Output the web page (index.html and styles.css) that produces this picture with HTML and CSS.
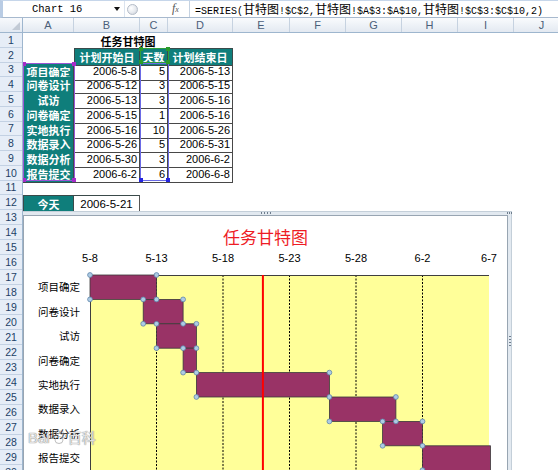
FILE: index.html
```html
<!DOCTYPE html>
<html lang="zh-CN">
<head>
<meta charset="utf-8">
<title>任务甘特图</title>
<link rel="stylesheet" href="styles.css">
</head>
<body>
<div class="app">
  <div class="fbar">
    <div class="namebox"><span class="name">Chart 16</span><span class="dd"></span></div>
    <div class="fxarea"><span class="knob"></span><span class="fx"><i>f</i><small>x</small></span></div>
    <div class="formula">=SERIES(<span class="cjk">甘特图</span>!$C$2,<span class="cjk">甘特图</span>!$A$3:$A$10,<span class="cjk">甘特图</span>!$C$3:$C$10,2)</div>
  </div>
  <div class="sheet">
    <div class="corner"><span class="tri"></span></div>
    <div class="colhdr">
      <span>A</span><span>B</span><span>C</span><span>D</span><span>E</span><span>F</span><span>G</span><span>H</span><span>I</span><span>J</span>
    </div>
    <div class="rowhdr">
      <span>1</span><span>2</span><span>3</span><span>4</span><span>5</span><span>6</span><span>7</span><span>8</span><span>9</span><span>10</span>
      <span>11</span><span>12</span><span>13</span><span>14</span><span>15</span><span>16</span><span>17</span><span>18</span><span>19</span><span>20</span>
      <span>21</span><span>22</span><span>23</span><span>24</span><span>25</span><span>26</span><span>27</span><span>28</span><span>29</span><span>30</span>
    </div>
    <div class="cells">
      <div class="row"><div class="ttl">任务甘特图</div></div>
      <div class="row"><div></div><div class="hd bt bl">计划开始日</div><div class="hd bt">天数</div><div class="hd bt">计划结束日</div></div>
      <div class="row"><div class="lab bl bt">项目确定</div><div class="num">2006-5-8</div><div class="num">5</div><div class="num">2006-5-13</div></div>
      <div class="row"><div class="lab bl">问卷设计</div><div class="num">2006-5-12</div><div class="num">3</div><div class="num">2006-5-15</div></div>
      <div class="row"><div class="lab bl">试访</div><div class="num">2006-5-13</div><div class="num">3</div><div class="num">2006-5-16</div></div>
      <div class="row"><div class="lab bl">问卷确定</div><div class="num">2006-5-15</div><div class="num">1</div><div class="num">2006-5-16</div></div>
      <div class="row"><div class="lab bl">实地执行</div><div class="num">2006-5-16</div><div class="num">10</div><div class="num">2006-5-26</div></div>
      <div class="row"><div class="lab bl">数据录入</div><div class="num">2006-5-26</div><div class="num">5</div><div class="num">2006-5-31</div></div>
      <div class="row"><div class="lab bl">数据分析</div><div class="num">2006-5-30</div><div class="num">3</div><div class="num">2006-6-2</div></div>
      <div class="row"><div class="lab bl">报告提交</div><div class="num">2006-6-2</div><div class="num">6</div><div class="num">2006-6-8</div></div>
      <div class="row"></div>
      <div class="row"><div class="lab bl bt">今天</div><div class="today bt">2006-5-21</div></div>

      <div class="sel sel-a"><i class="h tl"></i><i class="h tr"></i><i class="h bl2"></i><i class="h br"></i></div>
      <div class="sel sel-c"><i class="h bl2"></i><i class="h br"></i></div>
      <div class="sel sel-c2"><i class="h tl"></i><i class="h tr"></i><i class="h bl2"></i><i class="h br"></i></div>

      <div class="chart">
        <div class="chart-inner">
          <div class="ctitle">任务甘特图</div>
          <div class="axis"><span>5-8</span><span>5-13</span><span>5-18</span><span>5-23</span><span>5-28</span><span>6-2</span><span>6-7</span></div>
          <div class="cbody">
            <div class="cats"><span>项目确定</span><span>问卷设计</span><span>试访</span><span>问卷确定</span><span>实地执行</span><span>数据录入</span><span>数据分析</span><span>报告提交</span></div>
            <svg class="plot" width="399" height="200" viewBox="0 0 399 200">
              <rect x="0" y="0" width="399" height="200" fill="#ffff99"/>
              <g stroke="#000" stroke-width="1" stroke-dasharray="2 1.5">
                <line x1="66.5" y1="0" x2="66.5" y2="200"/>
                <line x1="133" y1="0" x2="133" y2="200"/>
                <line x1="199.5" y1="0" x2="199.5" y2="200"/>
                <line x1="266" y1="0" x2="266" y2="200"/>
                <line x1="332.5" y1="0" x2="332.5" y2="200"/>
              </g>
              <line x1="0.5" y1="0" x2="0.5" y2="200" stroke="#3f3f3f" stroke-width="1"/>
              <line x1="0" y1="0.5" x2="399" y2="0.5" stroke="#3f3f3f" stroke-width="1.2"/>
              <g fill="#993366" stroke="#3a3a3a" stroke-width="0.8">
                <rect x="0" y="0" width="66.5" height="24.4"/>
                <rect x="53.2" y="24.4" width="39.9" height="24.4"/>
                <rect x="66.5" y="48.8" width="39.9" height="24.4"/>
                <rect x="93.1" y="73.2" width="13.3" height="24.4"/>
                <rect x="106.4" y="97.6" width="133" height="24.4"/>
                <rect x="239.4" y="122" width="66.5" height="24.4"/>
                <rect x="292.6" y="146.4" width="39.9" height="24.4"/>
                <rect x="332.5" y="170.8" width="68" height="30"/>
              </g>
              <line x1="172.9" y1="0" x2="172.9" y2="200" stroke="#ff0000" stroke-width="2"/>
              <g fill="#aecbe4" stroke="#5f87ab" stroke-width="0.8">
                <circle cx="0" cy="0" r="2.4"/><circle cx="66.5" cy="0" r="2.4"/><circle cx="0" cy="24.4" r="2.4"/><circle cx="66.5" cy="24.4" r="2.4"/>
                <circle cx="53.2" cy="24.4" r="2.4"/><circle cx="93.1" cy="24.4" r="2.4"/><circle cx="53.2" cy="48.8" r="2.4"/><circle cx="93.1" cy="48.8" r="2.4"/>
                <circle cx="66.5" cy="48.8" r="2.4"/><circle cx="106.4" cy="48.8" r="2.4"/><circle cx="66.5" cy="73.2" r="2.4"/><circle cx="106.4" cy="73.2" r="2.4"/>
                <circle cx="93.1" cy="73.2" r="2.4"/><circle cx="93.1" cy="97.6" r="2.4"/><circle cx="106.4" cy="97.6" r="2.4"/>
                <circle cx="239.4" cy="97.6" r="2.4"/><circle cx="106.4" cy="122" r="2.4"/><circle cx="239.4" cy="122" r="2.4"/>
                <circle cx="305.9" cy="122" r="2.4"/><circle cx="239.4" cy="146.4" r="2.4"/><circle cx="305.9" cy="146.4" r="2.4"/>
                <circle cx="292.6" cy="146.4" r="2.4"/><circle cx="332.5" cy="146.4" r="2.4"/><circle cx="292.6" cy="170.8" r="2.4"/><circle cx="332.5" cy="170.8" r="2.4"/>
                <circle cx="332.5" cy="195.2" r="2.4"/>
              </g>
            </svg>
          </div>
          <div class="wm"><span class="wm-bai">Bai</span><svg class="paw" width="16" height="16" viewBox="0 0 16 16"><g fill="none" stroke="#9a9a9a" stroke-width="0.8"><ellipse cx="8" cy="11" rx="4" ry="3.5"/><ellipse cx="4" cy="5" rx="1.6" ry="2.2"/><ellipse cx="7" cy="3" rx="1.5" ry="2"/><ellipse cx="10.5" cy="3.5" rx="1.5" ry="2"/><ellipse cx="13" cy="7" rx="1.5" ry="2"/></g></svg><span class="wm-bk">百科</span></div>
        </div>
        <span class="grip-top"></span>
        <span class="grip-right"></span>
        <span class="grip-tr"></span>
      </div>
    </div>
  </div>
</div>
</body>
</html>
```

FILE: styles.css
```css
* { box-sizing: border-box; margin: 0; padding: 0; }
html, body { width: 558px; height: 470px; overflow: hidden; background: #fff; }
body { font-family: "Liberation Sans", "Noto Sans CJK SC", sans-serif; color: #000; }
.app { width: 558px; height: 470px; position: relative; overflow: hidden; }

/* formula bar */
.fbar { display: flex; height: 18px; border-top: 1px solid #c6d6ea; border-bottom: 1px solid #a7b9ce; border-left: 3px solid #b9cce4; background: #fff; }
.namebox { width: 121px; display: flex; align-items: center; padding-left: 29px; font-family: "Liberation Mono", monospace; font-size: 10.5px; }
.namebox .dd { margin-left: auto; margin-right: 4px; width: 0; height: 0; border-left: 3px solid transparent; border-right: 3px solid transparent; border-top: 4px solid #111; }
.fxarea { width: 66px; display: flex; align-items: center; border-left: 1px solid #dbe3ee; border-right: 1px solid #c5d2e1; }
.knob { margin-left: 2px; width: 11px; height: 11px; border-radius: 50%; border: 1px solid #b4bcc8; background: radial-gradient(circle at 35% 35%, #ffffff 0, #e6e9ee 55%, #c4cad3 100%); }
.fx { margin-left: 34px; font-family: "Liberation Serif", serif; font-size: 12px; color: #555; line-height: 14px; }
.fx i { font-style: italic; }
.fx small { font-size: 8px; font-style: italic; }
.formula { flex: 1; padding-left: 5px; font-family: "Liberation Mono", monospace; font-size: 10px; line-height: 16px; white-space: nowrap; overflow: hidden; color: #000; }
.formula .cjk { font-family: "Noto Sans CJK SC", sans-serif; font-size: 12px; }

/* sheet */
.sheet { display: grid; grid-template-columns: 23px 1fr; grid-template-rows: 15px 1fr; height: 452px; }
.corner { background: linear-gradient(#f7f9fc, #e2e9f2); border-right: 1px solid #9eb6ce; border-bottom: 1px solid #9eb6ce; position: relative; }
.corner .tri { position: absolute; right: 2px; bottom: 2px; width: 0; height: 0; border-left: 8px solid transparent; border-bottom: 8px solid #c2cad5; }
.colhdr { display: grid; grid-template-columns: 51px 66px 28px 65px 57px repeat(5, 56px); background: linear-gradient(#f9fbfd, #e3e9f1); border-bottom: 1px solid #9eb6ce; overflow: hidden; }
.colhdr span { border-right: 1px solid #c6d2e0; text-align: center; font-size: 11px; line-height: 14px; color: #4b5e79; }
.rowhdr { display: grid; grid-template-rows: repeat(12, 14.75px) repeat(18, 15px); background: #e6edf7; border-right: 1px solid #9eb6ce; overflow: hidden; }
.rowhdr span { border-bottom: 1px solid #c3d1e3; display: flex; align-items: center; justify-content: center; font-size: 10.5px; color: #223f66; }

/* cells */
.cells { position: relative; overflow: hidden; }
.row { display: grid; grid-template-columns: 51px 66px 28px 65px; height: 14.75px; }
.row > div { display: flex; align-items: center; font-size: 11px; white-space: nowrap; }
.ttl { grid-column: 1 / 5; justify-content: center; font-family: "Noto Sans CJK SC", sans-serif; font-weight: 700; font-size: 12px; }
.hd, .lab { background: #0f7e7b; color: #fff; font-family: "Noto Sans CJK SC", sans-serif; font-weight: 700; justify-content: center; border-right: 1px solid #3a4a4a; border-bottom: 1px solid #3a4a4a; }
.num { justify-content: flex-end; padding-right: 2px; border-right: 1px solid #484848; border-bottom: 1px solid #484848; }
.today { justify-content: center; border-right: 1px solid #555; border-bottom: 1px solid #555; font-size: 11.5px !important; }
.bt { border-top: 1px solid #3a4a4a; }
.bl { border-left: 1px solid #3a4a4a; }

/* selection overlays */
.sel { position: absolute; border: 1px solid; }
.sel-a { left: 0; top: 29.5px; width: 52px; height: 118px; border-color: #9a55d6; }
.sel-c { left: 117px; top: 29.5px; width: 29px; height: 118px; border-color: #6a6ae6; }
.sel-c2 { left: 117px; top: 14.75px; width: 29px; height: 15px; border-color: #2f9e3a; }
.h { position: absolute; width: 4px; height: 4px; }
.h.tl { left: -2px; top: -2px; }
.h.tr { right: -2px; top: -2px; }
.h.bl2 { left: -2px; bottom: -2px; }
.h.br { right: -2px; bottom: -2px; }
.sel-a .h { background: #a52cc8; }
.sel-c .h { background: #2525e0; }
.sel-c2 .h { background: #2a9a2a; }

/* chart */
.chart { position: absolute; left: -4px; top: 178px; width: 493px; height: 300px; border: 1px solid #c4cfd9; background: #e2e9f0; padding: 3px; }
.chart-inner { position: relative; height: 100%; background: #fff; border: 1px solid #98a5b2; }
.ctitle { padding-top: 11px; height: 31px; line-height: 20px; text-align: center; font-family: "Noto Sans CJK SC", sans-serif; font-size: 17px; color: #ee1c25; }
.axis { margin-top: 5px; margin-left: 32.75px; width: 465.5px; display: grid; grid-template-columns: repeat(7, 1fr); font-size: 11px; line-height: 13px; text-align: center; }
.cbody { margin-top: 9.7px; display: grid; grid-template-columns: 66px 399px; }
.cats { display: flex; flex-direction: column; }
.cats span { height: 24.4px; display: flex; align-items: center; justify-content: flex-end; padding-right: 10px; font-family: "Noto Sans CJK SC", sans-serif; font-size: 10.5px; }
.plot { display: block; overflow: visible; }
.wm { position: absolute; left: 4px; top: 211px; display: flex; align-items: center; gap: 1px; color: rgba(255, 255, 255, 0.75); text-shadow: 0 0 1px #8a8a8a, 0 0 1px #8a8a8a; }
.wm-bai { font-size: 15px; font-family: "Liberation Sans", sans-serif; }
.wm-bk { font-size: 14px; font-family: "Noto Sans CJK SC", sans-serif; }
.paw { opacity: 0.8; }
.grip-top { position: absolute; left: 241px; top: 0px; width: 12px; height: 2px; background: repeating-linear-gradient(to right, #6d7c8c 0 1px, transparent 1px 3px); }
.grip-right { position: absolute; left: 489px; top: 124px; width: 2px; height: 12px; background: repeating-linear-gradient(to bottom, #6d7c8c 0 1px, transparent 1px 3px); }
.grip-tr { position: absolute; left: 487px; top: 0px; width: 5px; height: 2px; background: repeating-linear-gradient(to right, #6d7c8c 0 1px, transparent 1px 2px); }
```
